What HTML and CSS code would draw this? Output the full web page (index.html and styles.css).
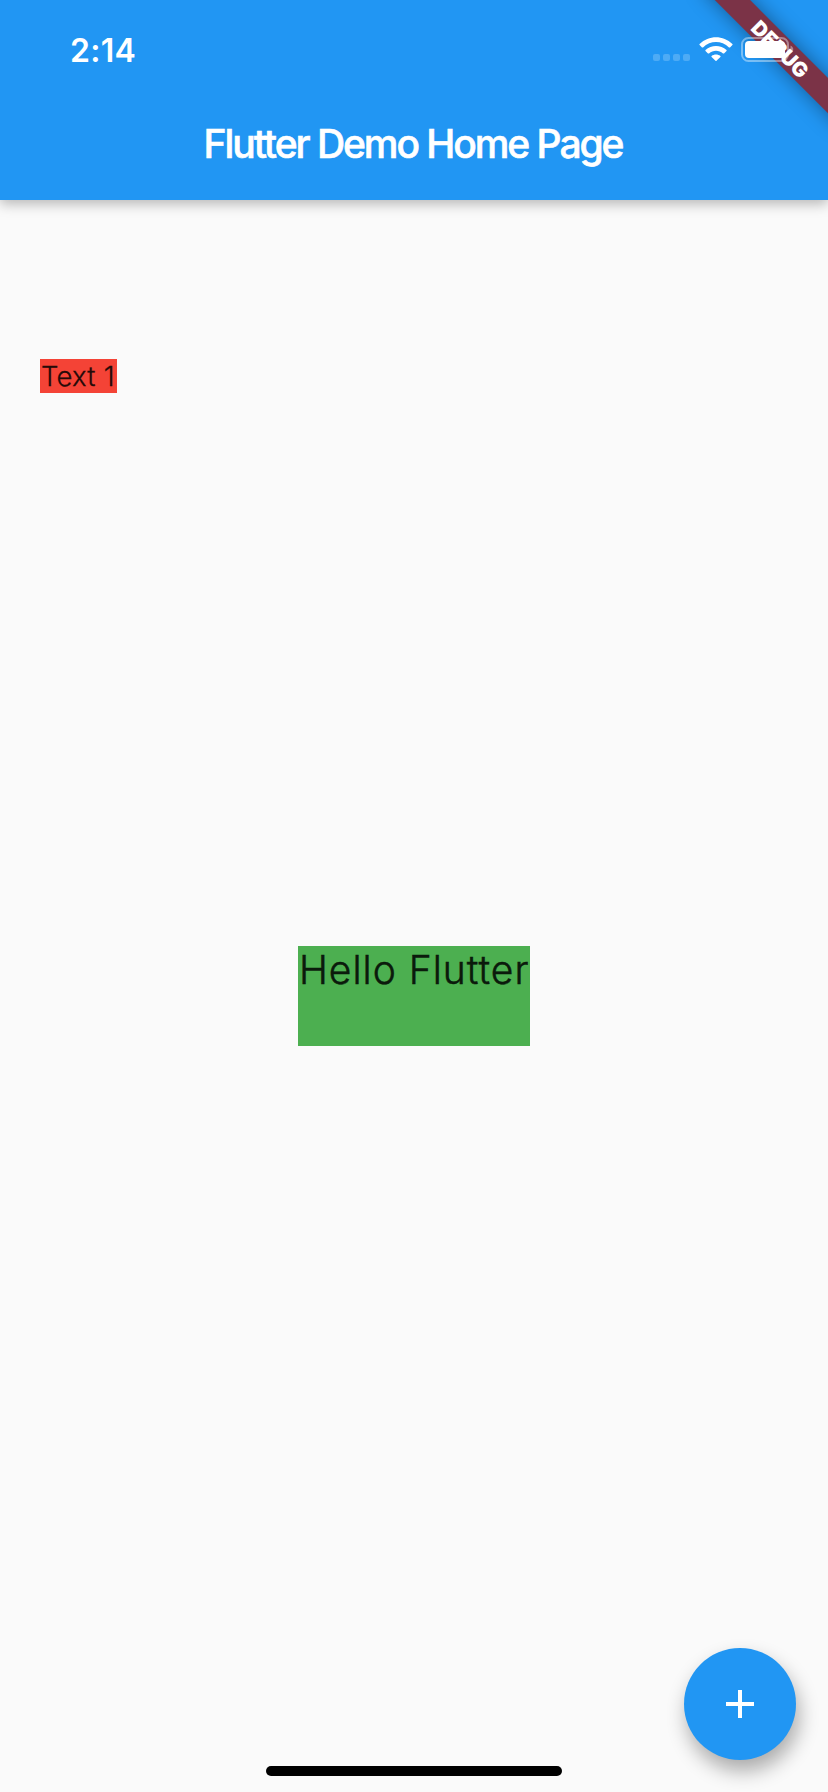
FILE: index.html
```html
<!DOCTYPE html>
<html lang="en">
<head>
<meta charset="utf-8">
<title>Flutter Demo Home Page</title>
<link rel="stylesheet" href="styles.css">
</head>
<body>
<div class="screen">
  <header class="app-bar">
    <div class="status-bar">
      <span class="time">2:14</span>
      <div class="indicators">
        <div class="signal"><i></i><i></i><i></i><i></i></div>
        <svg class="wifi" width="34" height="24" viewBox="0 0 34 24">
          <path d="M.6 7.1C9.8-2 24.2-2 33.4 7.1Q33.8 7.5 33.4 8L31 10.4Q30.5 10.8 30 10.4C22.5 3.3 11.5 3.3 4 10.4Q3.5 10.8 3 10.4L.6 8Q.2 7.5.6 7.1Z"/>
          <path d="M6.5 13C12.3 7.5 21.7 7.5 27.5 13Q27.9 13.5 27.5 14L25 16.4Q24.5 16.8 24 16.4C20 12.8 14 12.8 10 16.4Q9.5 16.8 9 16.4L6.5 14Q6.1 13.5 6.5 13Z"/>
          <path d="M12.6 19.1C15.1 17.1 18.9 17.1 21.4 19.1Q21.8 19.5 21.4 20L17.5 23.8Q17 24.2 16.5 23.8L12.6 20Q12.2 19.5 12.6 19.1Z"/>
        </svg>
        <svg class="battery" width="54" height="25" viewBox="0 0 54 25">
          <rect class="case" x="1" y="1" width="46" height="23" rx="6.5"/>
          <path class="cap" d="M49.5 8.5C53.2 10 53.2 15 49.5 16.5Z"/>
          <rect class="charge" x="4" y="4" width="40" height="17" rx="4"/>
        </svg>
      </div>
    </div>
    <h1 class="title">Flutter Demo Home Page</h1>
  </header>
  <main class="content">
    <span class="text-one">Text 1</span>
    <div class="hello">Hello Flutter</div>
  </main>
  <button class="fab" aria-label="Increment">
    <svg width="28" height="28" viewBox="0 0 28 28"><path d="M12 0h4v12h12v4H16v12h-4V16H0v-4h12z"/></svg>
  </button>
  <div class="home-indicator"></div>
  <div class="debug-banner"><span>DEBUG</span></div>
</div>
</body>
</html>
```
FILE: styles.css
```css
body {
  margin: 0;
  font-family: Inter, "Liberation Sans", sans-serif;
}

.screen {
  position: relative;
  display: flex;
  flex-direction: column;
  width: 828px;
  height: 1792px;
  overflow: hidden;
  background: #fafafa;
}

.app-bar {
  height: 200px;
  background: #2196f3;
  color: #fff;
  box-shadow: 0 4px 12px rgba(0, 0, 0, .27);
}

.status-bar {
  position: relative;
  z-index: 2;
  display: flex;
  justify-content: space-between;
  height: 88px;
  padding: 0 33px 0 70px;
}

.time {
  margin-top: 31px;
  font-size: 32px;
  line-height: 39px;
  font-weight: 600;
  letter-spacing: .3px;
}

.indicators {
  display: flex;
  align-items: flex-start;
  padding-top: 37px;
}

.signal {
  display: flex;
  gap: 3px;
  margin: 17px 9px 0 0;
}

.signal i {
  width: 7px;
  height: 7px;
  border-radius: 2px;
  background: rgba(255, 255, 255, .2);
}

.wifi {
  margin-right: 8px;
  fill: #fff;
}

.case {
  fill: none;
  stroke: rgba(255, 255, 255, .4);
  stroke-width: 2;
}

.cap {
  fill: rgba(255, 255, 255, .4);
}

.charge {
  fill: #fff;
}

.title {
  margin: 0;
  padding-right: 2px;
  font-size: 39px;
  line-height: 112px;
  font-weight: 500;
  letter-spacing: -2.05px;
  text-align: center;
  white-space: nowrap;
  -webkit-text-stroke: .6px #fff;
}

.content {
  display: flex;
  flex: 1;
  flex-direction: column;
  color: rgba(0, 0, 0, .87);
  white-space: nowrap;
}

.text-one {
  box-sizing: border-box;
  width: 76.5px;
  height: 33.5px;
  margin: 159px 0 0 40px;
  padding-left: 1px;
  background: #f44336;
  font-size: 27.5px;
  line-height: 35px;
  font-weight: 300;
  letter-spacing: .2px;
  -webkit-text-stroke: .3px #230a08;
}

.hello {
  align-self: center;
  box-sizing: border-box;
  width: 232px;
  height: 100px;
  margin-top: 553.5px;
  padding-left: 1px;
  background: #4caf50;
  font-size: 39px;
  line-height: 48px;
  font-weight: 300;
  letter-spacing: 1px;
  -webkit-text-stroke: .5px #0a170a;
}

.fab {
  position: absolute;
  right: 32px;
  bottom: 32px;
  display: flex;
  align-items: center;
  justify-content: center;
  width: 112px;
  height: 112px;
  padding: 0;
  border: 0;
  border-radius: 50%;
  background: #2196f3;
  box-shadow: 3px 11px 20px rgba(0, 0, 0, .32);
}

.fab path {
  fill: #fff;
}

.home-indicator {
  position: absolute;
  left: 266px;
  bottom: 16px;
  width: 296px;
  height: 10px;
  border-radius: 5px;
  background: #000;
}

.debug-banner {
  position: absolute;
  left: 681px;
  top: 36px;
  display: flex;
  align-items: center;
  justify-content: center;
  width: 200px;
  height: 24.7px;
  background: #7b3347;
  box-shadow: 0 0 20px rgba(0, 0, 0, .4);
  color: #fff;
  font-size: 20.4px;
  font-weight: 900;
  transform: rotate(45deg);
}

.debug-banner span {
  position: relative;
  top: 1px;
}
```
